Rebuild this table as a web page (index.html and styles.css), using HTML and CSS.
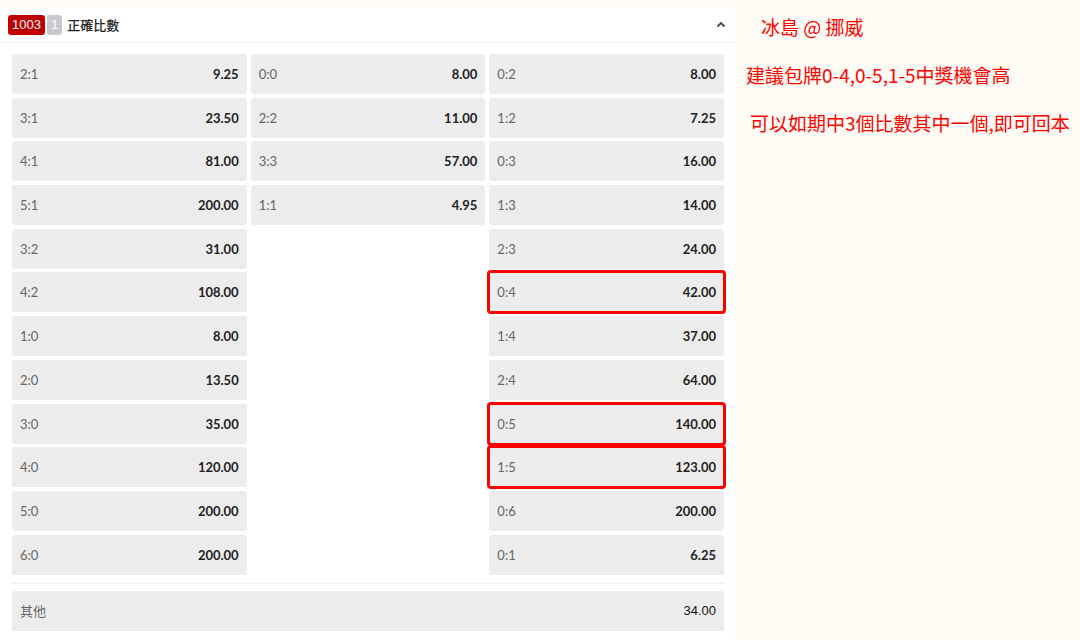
FILE: index.html
```html
<!DOCTYPE html>
<html lang="zh-Hant">
<head>
    <meta charset="UTF-8">
    <title>正確比數</title>
    <link rel="stylesheet" href="styles.css">
</head>
<body>
    <div class="panel">
        <div class="panel-head">
            <span class="badge-id">1003</span>
            <span class="badge-num">1</span>
            <span class="title">正確比數</span>
            <svg class="chevron" width="10" height="7" viewBox="0 0 10 7"><path d="M1.5 5.5 L5 2 L8.5 5.5" fill="none" stroke="#444" stroke-width="1.8"/></svg>
        </div>
        <div class="grid">
            <div class="col">
                <div class="cell"><span class="score">2:1</span><span class="odds">9.25</span></div>
                <div class="cell"><span class="score">3:1</span><span class="odds">23.50</span></div>
                <div class="cell"><span class="score">4:1</span><span class="odds">81.00</span></div>
                <div class="cell"><span class="score">5:1</span><span class="odds">200.00</span></div>
                <div class="cell"><span class="score">3:2</span><span class="odds">31.00</span></div>
                <div class="cell"><span class="score">4:2</span><span class="odds">108.00</span></div>
                <div class="cell"><span class="score">1:0</span><span class="odds">8.00</span></div>
                <div class="cell"><span class="score">2:0</span><span class="odds">13.50</span></div>
                <div class="cell"><span class="score">3:0</span><span class="odds">35.00</span></div>
                <div class="cell"><span class="score">4:0</span><span class="odds">120.00</span></div>
                <div class="cell"><span class="score">5:0</span><span class="odds">200.00</span></div>
                <div class="cell"><span class="score">6:0</span><span class="odds">200.00</span></div>
            </div>
            <div class="col">
                <div class="cell"><span class="score">0:0</span><span class="odds">8.00</span></div>
                <div class="cell"><span class="score">2:2</span><span class="odds">11.00</span></div>
                <div class="cell"><span class="score">3:3</span><span class="odds">57.00</span></div>
                <div class="cell"><span class="score">1:1</span><span class="odds">4.95</span></div>
            </div>
            <div class="col">
                <div class="cell"><span class="score">0:2</span><span class="odds">8.00</span></div>
                <div class="cell"><span class="score">1:2</span><span class="odds">7.25</span></div>
                <div class="cell"><span class="score">0:3</span><span class="odds">16.00</span></div>
                <div class="cell"><span class="score">1:3</span><span class="odds">14.00</span></div>
                <div class="cell"><span class="score">2:3</span><span class="odds">24.00</span></div>
                <div class="cell marked"><span class="score">0:4</span><span class="odds">42.00</span></div>
                <div class="cell"><span class="score">1:4</span><span class="odds">37.00</span></div>
                <div class="cell"><span class="score">2:4</span><span class="odds">64.00</span></div>
                <div class="cell marked"><span class="score">0:5</span><span class="odds">140.00</span></div>
                <div class="cell marked"><span class="score">1:5</span><span class="odds">123.00</span></div>
                <div class="cell"><span class="score">0:6</span><span class="odds">200.00</span></div>
                <div class="cell"><span class="score">0:1</span><span class="odds">6.25</span></div>
            </div>
        </div>
        <div class="divider"></div>
        <div class="cell other"><span class="score">其他</span><span class="odds">34.00</span></div>
    </div>

    <div class="notes">
        <p class="note note-match">冰島 @ 挪威</p>
        <p class="note">建議包牌0-4,0-5,1-5中獎機會高</p>
        <p class="note note-last">可以如期中3個比數其中一個,即可回本</p>
    </div>
</body>
</html>
```

FILE: styles.css
```css
body {
    margin: 0;
    background-color: #fffcf5;
    font-family: Lato, "Noto Sans CJK TC", sans-serif;
    display: flex;
    align-items: flex-start;
    height: 640px;
    overflow: hidden;
}
.panel {
    width: 735px;
    margin-top: 7px;
    background: #ffffff;
    flex-shrink: 0;
    padding-bottom: 12px;
}
.panel-head {
    height: 36px;
    display: flex;
    align-items: center;
    padding-left: 8px;
    padding-right: 8px;
    border-bottom: 1px solid #f0f0f0;
    box-sizing: border-box;
}
.badge-id {
    background-color: #c00000;
    color: #ffffff;
    font-family: "Liberation Sans", Arial, sans-serif;
    font-size: 13px;
    line-height: 20px;
    padding: 0 4px;
    border-radius: 3px;
}
.badge-num {
    background-color: #c9c9ce;
    color: #ffffff;
    font-family: "Liberation Sans", Arial, sans-serif;
    font-size: 13px;
    line-height: 20px;
    padding: 0 4px;
    border-radius: 3px;
    margin-left: 2px;
}
.title {
    margin-left: 5px;
    font-size: 13px;
    color: #222222;
    font-family: "Noto Sans CJK TC", sans-serif;
    font-weight: 500;
}
.chevron {
    margin-left: auto;
    margin-right: 1px;
}
.grid {
    display: flex;
    gap: 4px;
    padding: 11px 11px 0 12px;
}
.col {
    flex: 1;
    display: flex;
    flex-direction: column;
    gap: 3.7px;
}
.cell {
    height: 40px;
    background: #ececec;
    border-radius: 3px;
    display: flex;
    align-items: center;
    justify-content: space-between;
    padding: 0 8px;
    font-size: 13px;
    box-sizing: border-box;
}
.cell.marked {
    outline: 3px solid #ff0000;
    outline-offset: -1px;
    border-radius: 2px;
}
.score {
    color: #666666;
}
.odds {
    color: #222222;
    font-weight: bold;
}
.divider {
    height: 1px;
    background: #eeeeee;
    margin: 8px 11px 7px 12px;
}
.other {
    margin: 0 11px 0 12px;
    font-family: "Liberation Sans", Arial, "Noto Sans CJK TC", sans-serif;
}
.other .score {
    font-family: "Noto Sans CJK TC", sans-serif;
}
.other .odds {
    font-weight: normal;
    color: #111111;
}
.notes {
    padding-top: 14px;
}
.note {
    color: #ff0000;
    font-family: "Noto Sans CJK TC", sans-serif;
    font-size: 19px;
    margin: 0 0 22px 11px;
    line-height: 26px;
    white-space: nowrap;
}
.note-match {
    margin-left: 26px;
}
.note-last {
    margin-left: 15px;
}
```
